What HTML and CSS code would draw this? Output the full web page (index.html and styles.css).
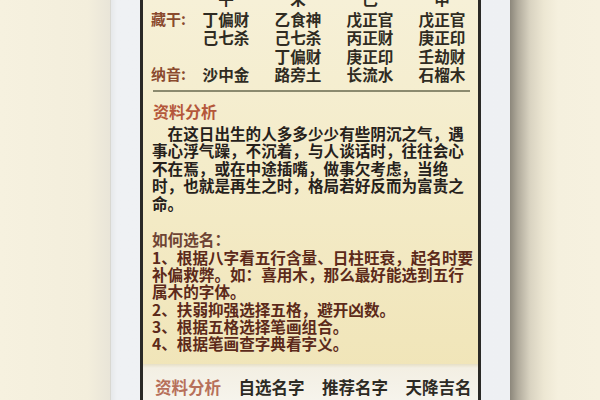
FILE: index.html
```html
<!DOCTYPE html>
<html lang="zh-CN">
<head>
<meta charset="utf-8">
<title>八字起名</title>
<link rel="stylesheet" href="styles.css">
</head>
<body>
<div class="page">
  <div class="bg-left"></div>
  <div class="phone">
    <div class="screen">
      <div class="content">
        <div class="info">
          <span class="lbl"></span><span class="val">午</span><span class="val">未</span><span class="val">巳</span><span class="val">申</span>
          <span class="lbl">藏干:</span><span class="val">丁偏财</span><span class="val">乙食神</span><span class="val">戊正官</span><span class="val">戊正官</span>
          <span class="lbl"></span><span class="val">己七杀</span><span class="val">己七杀</span><span class="val">丙正财</span><span class="val">庚正印</span>
          <span class="lbl"></span><span class="val"></span><span class="val">丁偏财</span><span class="val">庚正印</span><span class="val">壬劫财</span>
          <span class="lbl">纳音:</span><span class="val">沙中金</span><span class="val">路旁土</span><span class="val">长流水</span><span class="val">石榴木</span>
        </div>
        <div class="rule"></div>
        <h2 class="heading">资料分析</h2>
        <p class="analysis">在这日出生的人多多少少有些阴沉之气，遇<br>事心浮气躁，不沉着，与人谈话时，往往会心<br>不在焉，或在中途插嘴，做事欠考虑，当绝<br>时，也就是再生之时，格局若好反而为富贵之<br>命。</p>
        <div class="advice">
          <p class="advice-title">如何选名：</p>
          <p class="advice-text">1、根据八字看五行含量、日柱旺衰，起名时要<br>补偏救弊。如：喜用木，那么最好能选到五行<br>属木的字体。<br>2、扶弱抑强选择五格，避开凶数。<br>3、根据五格选择笔画组合。<br>4、根据笔画查字典看字义。</p>
        </div>
      </div>
      <nav class="tabs">
        <span class="tab active">资料分析</span>
        <span class="tab">自选名字</span>
        <span class="tab">推荐名字</span>
        <span class="tab">天降吉名</span>
      </nav>
    </div>
  </div>
  <div class="shadow-right"></div>
</div>
</body>
</html>
```

FILE: styles.css
```css
* { box-sizing: border-box; }
html, body { margin: 0; padding: 0; }
body {
  font-family: "Noto Sans CJK SC", "Noto Sans", sans-serif;
  background: #f6f1df;
}
.page {
  display: flex;
  width: 600px;
  height: 400px;
  overflow: hidden;
  background: #f6f1df;
}
.bg-left {
  width: 110px;
  flex: none;
  background: linear-gradient(to right, #f6f1df 0, #f3eedc 80%, #e9e5d8 100%);
}
.phone {
  display: flex;
  width: 400px;
  flex: none;
  background: linear-gradient(to right, #e6e8ea 0, #eff1f4 6px, #eef0f3 100%);
  border-left: 1px solid #d9d8d2;
  padding: 0 29px 0 29px;
}
.screen {
  flex: 1;
  display: flex;
  flex-direction: column;
  overflow: hidden;
  border-left: 3px solid #2a2926;
  border-right: 3px solid #2a2926;
  background: linear-gradient(to bottom, #f6f0d7 0, #f4ecca 40%, #f0e4b6 100%);
}
.content {
  flex: 1;
  overflow: hidden;
}
.info {
  display: grid;
  grid-template-columns: 39px repeat(4, 72px);
  grid-template-rows: 20.5px repeat(4, 18.5px);
  margin-top: -11px;
  padding-left: 8px;
  line-height: 18.5px;
}
.lbl {
  font-size: 15px;
  font-weight: 700;
  color: #8a4a2e;
  white-space: nowrap;
}
.val {
  font-size: 15.6px;
  font-weight: 700;
  color: #2f2b22;
  text-align: center;
  white-space: nowrap;
}
.rule {
  height: 2px;
  margin: 6.5px 8px 0 10px;
  background: #8b8a6f;
}
.heading {
  margin: 10px 0 0 10px;
  font-size: 16px;
  line-height: 18px;
  font-weight: 700;
  color: #b4573a;
}
.analysis {
  margin: 4.5px 0 0 0;
  padding-left: 9px;
  font-size: 15.6px;
  line-height: 17.6px;
  font-weight: 700;
  color: #26211b;
  text-indent: 15.6px;
  white-space: nowrap;
}
.advice {
  margin-top: 19px;
  padding-left: 9px;
  font-size: 15.6px;
  line-height: 17.3px;
  font-weight: 700;
  white-space: nowrap;
}
.advice-title {
  margin: 0;
  color: #6e4434;
}
.advice-text {
  margin: 0;
  color: #5c2a1a;
}
.tabs {
  flex: none;
  height: 36px;
  display: flex;
  gap: 17.5px;
  padding: 14px 0 0 12px;
  background: linear-gradient(to bottom, #e6dfc6 0, #f3efe3 4px, #f6f4ec 100%);
  font-size: 16.5px;
  line-height: 18px;
  font-weight: 700;
  color: #2d2a24;
  white-space: nowrap;
}
.tab.active {
  color: #b7705a;
}
.shadow-right {
  flex: 1;
  background: linear-gradient(to right, #8c877b 0, #b1ab9c 8px, #d9d3c1 20px, #ede7d3 34px, #f5f0de 48px, #f6f1df 100%);
}
```
